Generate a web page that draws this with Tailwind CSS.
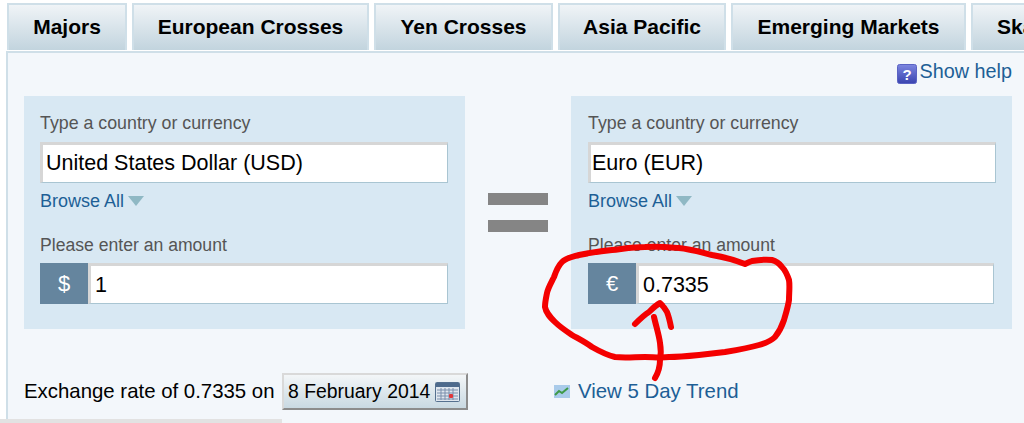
<!DOCTYPE html>
<html lang="en">
  <head>
    <meta charset="UTF-8" />
    <title>Currency Converter</title>
    <script src="https://cdn.jsdelivr.net/npm/@tailwindcss/browser@4"></script>
  </head>
  <body class="bg-white font-['Liberation_Sans',Arial,sans-serif]">
    <div class="relative w-[1024px] h-[423px] overflow-hidden pt-[3px]">
      <!-- Tabs -->
      <div class="flex gap-[5px] pl-[7px] h-[47px] text-[21px] font-bold text-black whitespace-nowrap">
        <div class="shrink-0 w-[120px] flex items-center justify-center pb-[1px] border-2 border-b-0 border-[#cfdfe8] bg-gradient-to-b from-[#f0f4f7] to-[#c2d4de]">Majors</div>
        <div class="shrink-0 w-[237px] flex items-center justify-center pb-[1px] border-2 border-b-0 border-[#cfdfe8] bg-gradient-to-b from-[#f0f4f7] to-[#c2d4de]">European Crosses</div>
        <div class="shrink-0 w-[179px] flex items-center justify-center pb-[1px] border-2 border-b-0 border-[#cfdfe8] bg-gradient-to-b from-[#f0f4f7] to-[#c2d4de]">Yen Crosses</div>
        <div class="shrink-0 w-[168px] flex items-center justify-center pb-[1px] border-2 border-b-0 border-[#cfdfe8] bg-gradient-to-b from-[#f0f4f7] to-[#c2d4de]">Asia Pacific</div>
        <div class="shrink-0 w-[235px] flex items-center justify-center pb-[1px] border-2 border-b-0 border-[#cfdfe8] bg-gradient-to-b from-[#f0f4f7] to-[#c2d4de]">Emerging Markets</div>
        <div class="shrink-0 w-[120px] flex items-center pl-[24px] pb-[1px] border-2 border-b-0 border-[#cfdfe8] bg-gradient-to-b from-[#f0f4f7] to-[#c2d4de]">Skandinavia</div>
      </div>

      <!-- Panel -->
      <div class="ml-[6px] mt-[1px] h-[372px] border-l-2 border-t-2 border-[#cfdfe8] bg-[#f3f7fb]">
        <div class="flex justify-end items-start pt-[6px] pr-[12px] h-[43px] text-[#1d5f96] text-[19.8px] leading-[24px]">
          <svg class="mt-[5px] mr-[3px]" width="20" height="20" viewBox="0 0 20 20">
            <defs>
              <linearGradient id="helpFill" x1="0" y1="0" x2="0" y2="1">
                <stop offset="0" stop-color="#7c86e0" />
                <stop offset="1" stop-color="#3a44b0" />
              </linearGradient>
            </defs>
            <rect x="0.5" y="0.5" width="19" height="19" rx="2" fill="url(#helpFill)" stroke="#5a63c4" />
            <text x="10" y="16" text-anchor="middle" font-size="15" font-weight="700" font-family="Liberation Sans" fill="#fff">?</text>
          </svg>
          <span>Show help</span>
        </div>

        <div class="flex items-start pl-[16px]">
          <!-- From -->
          <div class="w-[441px] h-[233px] bg-[#d8e8f3] pl-[16px] pr-[17px] pt-[16px]">
            <div class="text-[17.8px] leading-[22px] text-[#555]">Type a country or currency</div>
            <input value="United States Dollar (USD)" class="mt-[8px] block w-[408px] h-[41px] bg-white border-t-[3px] border-l-[3px] border-r border-b border-t-[#d6d6d6] border-l-[#d6d6d6] border-r-[#a9c5d2] border-b-[#a9c5d2] pl-[3px] text-[21.5px] text-black" />
            <div class="mt-[7px] flex items-center text-[#1d5f96] text-[18px] leading-[22px]">
              Browse All
              <svg class="ml-[4px]" width="16" height="10" viewBox="0 0 16 10"><path d="M0 0h16l-8 10z" fill="#8fb8c4" /></svg>
            </div>
            <div class="mt-[22px] text-[17.6px] leading-[22px] text-[#555]">Please enter an amount</div>
            <div class="mt-[7px] flex">
              <div class="w-[48px] h-[41px] bg-[#65859e] text-white text-[22px] flex items-center justify-center">$</div>
              <input value="1" class="block w-[360px] h-[41px] bg-white border-t-[3px] border-l-[3px] border-r border-b border-t-[#d6d6d6] border-l-[#d6d6d6] border-r-[#a9c5d2] border-b-[#a9c5d2] pl-[4px] pt-[2px] text-[21.5px] text-black" />
            </div>
          </div>

          <!-- Equals -->
          <div class="w-[106px] pt-[97px] flex flex-col items-center gap-[15px]">
            <div class="w-[60px] h-[12px] bg-[#858585]"></div>
            <div class="w-[60px] h-[12px] bg-[#858585]"></div>
          </div>

          <!-- To -->
          <div class="w-[441px] h-[233px] bg-[#d8e8f3] pl-[17px] pr-[16px] pt-[16px]">
            <div class="text-[17.8px] leading-[22px] text-[#555]">Type a country or currency</div>
            <input value="Euro (EUR)" class="mt-[8px] block w-[408px] h-[41px] bg-white border-t-[3px] border-l-[3px] border-r border-b border-t-[#d6d6d6] border-l-[#d6d6d6] border-r-[#a9c5d2] border-b-[#a9c5d2] pl-[1px] text-[21.5px] text-black" />
            <div class="mt-[7px] flex items-center text-[#1d5f96] text-[18px] leading-[22px]">
              Browse All
              <svg class="ml-[4px]" width="16" height="10" viewBox="0 0 16 10"><path d="M0 0h16l-8 10z" fill="#8fb8c4" /></svg>
            </div>
            <div class="mt-[22px] text-[17.6px] leading-[22px] text-[#555]">Please enter an amount</div>
            <div class="mt-[7px] flex">
              <div class="w-[48px] h-[41px] bg-[#65859e] text-white text-[22px] flex items-center justify-center">€</div>
              <input value="0.7335" class="block w-[358px] h-[41px] bg-white border-t-[3px] border-l-[3px] border-r border-b border-t-[#d6d6d6] border-l-[#d6d6d6] border-r-[#a9c5d2] border-b-[#a9c5d2] pl-[4px] pt-[2px] text-[21.5px] text-black" />
            </div>
          </div>
        </div>

        <!-- Rate line -->
        <div class="flex items-center mt-[44px] pl-[16px]">
          <span class="w-[258px] text-[20.4px] text-black whitespace-nowrap">Exchange rate of 0.7335 on</span>
          <div class="w-[186px] h-[37px] flex items-center pl-[4px] gap-[5px] text-[19.4px] text-black whitespace-nowrap border-2 border-t-[#d9d9d9] border-l-[#d9d9d9] border-r-[#8c8c8c] border-b-[#8c8c8c] bg-gradient-to-b from-[#f3f6f8] to-[#c9d9e2]">
            8 February 2014
            <svg class="shrink-0" width="25" height="20" viewBox="0 0 25 20">
              <rect x="0.5" y="0.5" width="24" height="19" rx="1" fill="#dfe6ee" stroke="#55708f" />
              <rect x="1" y="1" width="23" height="4" fill="#4d6a8c" />
              <path d="M2 8h21M2 11h21M2 14h21M2 17h21M6 6v12M10 6v12M14 6v12M18 6v12" stroke="#7b8fac" stroke-width="1" />
              <rect x="14" y="12" width="4" height="4" rx="1" fill="#e0363a" />
            </svg>
          </div>
          <svg class="ml-[86px]" width="16" height="13" viewBox="0 0 16 13">
            <rect width="16" height="13" fill="#a9cbea" />
            <path d="M1 10l4-4 3 2 6-5" fill="none" stroke="#3e9a48" stroke-width="2" />
          </svg>
          <span class="ml-[8px] text-[20.4px] text-[#1d5f96] whitespace-nowrap">View 5 Day Trend</span>
        </div>
      </div>

      <!-- Horizontal scrollbar -->
      <div class="absolute left-0 bottom-0 w-[282px] h-[4px] bg-[#e2e2e2]"></div>

      <!-- Red hand-drawn annotation -->
      <svg class="absolute left-0 top-0 pointer-events-none" width="1024" height="423" viewBox="0 0 1024 423" fill="none" stroke="#f40000" stroke-width="6" stroke-linecap="round" stroke-linejoin="round">
        <path d="M745 264 C735 260 724 257 712 255 C700 252 690 249 679 248 C667 247 656 246 645 247 C633 247 622 249 612 250 C600 251 589 253 579 255 C572 257 566 258 562 262 C558 266 556 271 554 277 C551 283 548 288 547 293 C546 298 545 302 545 307 C546 313 550 317 555 322 C560 327 566 331 572 335 C579 339 585 342 592 347 C599 351 606 355 615 357 C625 358 635 357 645 357 C653 357 661 358 669 357 C679 357 689 356 699 355 C708 354 716 353 725 352 C737 350 749 348 759 345 C766 343 771 341 775 337 C779 332 782 326 784 320 C786 313 788 307 789 300 C789 293 790 286 789 280 C787 274 785 270 782 267 C779 263 776 261 772 260 C765 259 758 260 752 261 C749 262 747 263 745 264 Z" />
        <path d="M654 317 C656 326 659 335 660 343 C661 349 661 355 660 360 C660 367 658 373 655 378" />
        <path d="M635 324 C640 319 644 315 649 312 C653 308 656 305 660 303 C663 306 665 308 667 312 C669 317 670 322 671 327" />
      </svg>
    </div>
  </body>
</html>
